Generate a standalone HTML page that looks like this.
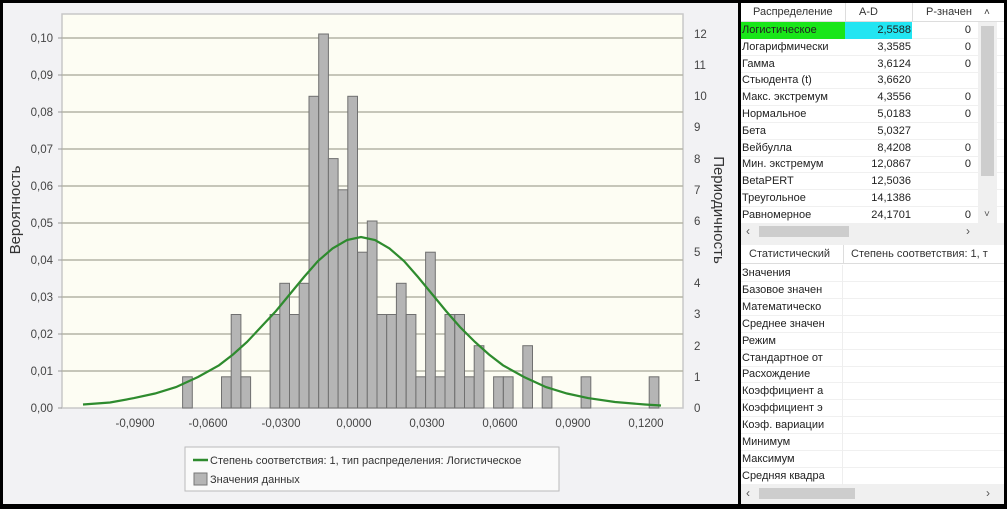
<!DOCTYPE html>
<html><head><meta charset="utf-8"><style>
*{margin:0;padding:0;box-sizing:border-box}
body{width:1007px;height:507px;background:#000;position:relative;overflow:hidden;font-family:"Liberation Sans","DejaVu Sans",sans-serif}
#chart{position:absolute;left:3px;top:3px;width:735px;height:501px;background:#f2f2f4}
#panel{position:absolute;left:741px;top:3px;width:263px;height:501px;background:#f0f0f0}
.t{position:absolute;left:0;width:263px;background:#fff;font-size:11px;color:#222}
.row{position:absolute;left:0;height:17px;line-height:17px;width:100%;border-bottom:1px solid #f0f0f0}
.c{position:absolute;top:0;height:17px;white-space:nowrap;overflow:hidden}
.hdr{position:absolute;top:0;left:0;width:100%;height:19px;background:#fff;border-bottom:1px solid #ddd;line-height:19px;color:#333}
.sb{position:absolute;background:#f0f0f0}
</style></head><body>
<div id="chart">
<svg width="735" height="501" viewBox="3 3 735 501" xmlns="http://www.w3.org/2000/svg" font-family="Liberation Sans, sans-serif">
<rect x="62" y="14" width="621" height="394" fill="#fdfdf3" stroke="#c8c8c8" stroke-width="1.5"/>
<g stroke="#b4b4a6" stroke-width="1.5">
<line x1="62" x2="683" y1="371" y2="371"/><line x1="62" x2="683" y1="334" y2="334"/><line x1="62" x2="683" y1="297" y2="297"/><line x1="62" x2="683" y1="260" y2="260"/><line x1="62" x2="683" y1="223" y2="223"/><line x1="62" x2="683" y1="186" y2="186"/><line x1="62" x2="683" y1="149" y2="149"/><line x1="62" x2="683" y1="112" y2="112"/><line x1="62" x2="683" y1="75" y2="75"/><line x1="62" x2="683" y1="38" y2="38"/>
</g>
<g fill="#b5b5b5" stroke="#707070" stroke-width="1">
<rect x="182.6" y="376.8" width="9.7" height="31.2"/>
<rect x="221.5" y="376.8" width="9.7" height="31.2"/>
<rect x="231.2" y="314.5" width="9.7" height="93.5"/>
<rect x="240.9" y="376.8" width="9.7" height="31.2"/>
<rect x="270.1" y="314.5" width="9.7" height="93.5"/>
<rect x="279.8" y="283.3" width="9.7" height="124.7"/>
<rect x="289.5" y="314.5" width="9.7" height="93.5"/>
<rect x="299.2" y="283.3" width="9.7" height="124.7"/>
<rect x="309.0" y="96.3" width="9.7" height="311.7"/>
<rect x="318.7" y="34" width="9.7" height="374"/>
<rect x="328.4" y="158.6" width="9.7" height="249.4"/>
<rect x="338.1" y="189.8" width="9.7" height="218.2"/>
<rect x="347.8" y="96.3" width="9.7" height="311.7"/>
<rect x="357.6" y="252.2" width="9.7" height="155.8"/>
<rect x="367.3" y="221" width="9.7" height="187"/>
<rect x="377.0" y="314.5" width="9.7" height="93.5"/>
<rect x="386.7" y="314.5" width="9.7" height="93.5"/>
<rect x="396.4" y="283.3" width="9.7" height="124.7"/>
<rect x="406.2" y="314.5" width="9.7" height="93.5"/>
<rect x="415.9" y="376.8" width="9.7" height="31.2"/>
<rect x="425.6" y="252.2" width="9.7" height="155.8"/>
<rect x="435.3" y="376.8" width="9.7" height="31.2"/>
<rect x="445.0" y="314.5" width="9.7" height="93.5"/>
<rect x="454.8" y="314.5" width="9.7" height="93.5"/>
<rect x="464.5" y="376.8" width="9.7" height="31.2"/>
<rect x="474.2" y="345.7" width="9.7" height="62.3"/>
<rect x="493.6" y="376.8" width="9.7" height="31.2"/>
<rect x="503.4" y="376.8" width="9.7" height="31.2"/>
<rect x="522.8" y="345.7" width="9.7" height="62.3"/>
<rect x="542.2" y="376.8" width="9.7" height="31.2"/>
<rect x="581.1" y="376.8" width="9.7" height="31.2"/>
<rect x="649.2" y="376.8" width="9.7" height="31.2"/>
</g>
<polyline fill="none" stroke="#2e8b2e" stroke-width="2.2" points="83,404.5 110,402.5 134,398.1 155,393.5 176,387.1 198,377 219,365.3 233,354.5 247,342 261,327 276,311 290,294 304,277 318,261 332.6,248.4 347,240 361,237 375,240 389.4,248.4 404,261 418,277 432,294 446,311 460,327 475,342 489,354.5 503,365.3 524,377 546,387.1 567,393.5 588,398.1 615,402 645,404.5 661,405.5"/>
<g stroke="#999"><line x1="58" x2="62" y1="408" y2="408"/><line x1="58" x2="62" y1="371" y2="371"/><line x1="58" x2="62" y1="334" y2="334"/><line x1="58" x2="62" y1="297" y2="297"/><line x1="58" x2="62" y1="260" y2="260"/><line x1="58" x2="62" y1="223" y2="223"/><line x1="58" x2="62" y1="186" y2="186"/><line x1="58" x2="62" y1="149" y2="149"/><line x1="58" x2="62" y1="112" y2="112"/><line x1="58" x2="62" y1="75" y2="75"/><line x1="58" x2="62" y1="38" y2="38"/></g>
<g font-size="11.5" fill="#444" text-anchor="end">
<text x="53" y="412">0,00</text><text x="53" y="375">0,01</text><text x="53" y="338">0,02</text><text x="53" y="301">0,03</text><text x="53" y="264">0,04</text><text x="53" y="227">0,05</text><text x="53" y="190">0,06</text><text x="53" y="153">0,07</text><text x="53" y="116">0,08</text><text x="53" y="79">0,09</text><text x="53" y="42">0,10</text>
</g>
<g font-size="11.5" fill="#444" text-anchor="start">
<text x="694" y="412">0</text><text x="694" y="381">1</text><text x="694" y="350">2</text><text x="694" y="318">3</text><text x="694" y="287">4</text><text x="694" y="256">5</text><text x="694" y="225">6</text><text x="694" y="194">7</text><text x="694" y="163">8</text><text x="694" y="131">9</text><text x="694" y="100">10</text><text x="694" y="69">11</text><text x="694" y="38">12</text>
</g>
<g font-size="11.5" fill="#444" text-anchor="middle">
<text x="135" y="427">-0,0900</text><text x="208" y="427">-0,0600</text><text x="281" y="427">-0,0300</text><text x="354" y="427">0,0000</text><text x="427" y="427">0,0300</text><text x="500" y="427">0,0600</text><text x="573" y="427">0,0900</text><text x="646" y="427">0,1200</text>
</g>
<text transform="translate(20,210) rotate(-90)" font-size="15" fill="#333" text-anchor="middle">Вероятность</text>
<text transform="translate(714,210) rotate(90)" font-size="15" fill="#333" text-anchor="middle">Периодичность</text>
<rect x="185" y="447" width="374" height="44" fill="#fafafa" stroke="#bbb"/>
<line x1="193" x2="208" y1="460" y2="460" stroke="#2e8b2e" stroke-width="2.5"/>
<text x="210" y="464" font-size="11" fill="#333">Степень соответствия: 1, тип распределения: Логистическое</text>
<rect x="194" y="473" width="13" height="12" fill="#b5b5b5" stroke="#777"/>
<text x="210" y="483" font-size="11" fill="#333">Значения данных</text>
</svg>
</div>
<div id="panel">
<div class="t" style="top:0;height:237px">
<div class="hdr"><span style="position:absolute;left:12px">Распределение</span><span style="position:absolute;left:104px;top:0;height:19px;border-left:1px solid #ddd"></span><span style="position:absolute;left:118px">A-D</span><span style="position:absolute;left:171px;top:0;height:19px;border-left:1px solid #ddd"></span><span style="position:absolute;left:185px">P-значен</span><span style="position:absolute;left:243px;font-size:10px">˄</span></div>
<div id="rows1"></div>
<div class="sb" style="left:237px;top:19px;width:19px;height:201px"><div style="position:absolute;left:3px;top:4px;width:13px;height:150px;background:#cdcdcd"></div><span style="position:absolute;left:6px;top:187px;font-size:10px;color:#555">˅</span></div>
<div class="sb" style="left:0;top:220px;width:263px;height:17px"><span style="position:absolute;left:5px;top:1px;font-size:12px;color:#555">‹</span><div style="position:absolute;left:18px;top:3px;width:90px;height:11px;background:#cdcdcd"></div><span style="position:absolute;left:225px;top:1px;font-size:12px;color:#555">›</span></div>
</div>
<div class="t" style="top:242px;height:257px">
<div class="hdr" style="background:#fff"><span style="position:absolute;left:8px">Статистический</span><span style="position:absolute;left:102px;top:0;height:19px;border-left:1px solid #ddd"></span><span style="position:absolute;left:110px;white-space:nowrap">Степень соответствия: 1, т</span></div>
<div id="rows2"></div>
<div class="sb" style="left:0;top:240px;width:263px;height:17px"><span style="position:absolute;left:5px;top:1px;font-size:12px;color:#555">‹</span><div style="position:absolute;left:18px;top:3px;width:96px;height:11px;background:#cdcdcd"></div><span style="position:absolute;left:245px;top:1px;font-size:12px;color:#555">›</span></div>
</div>
</div>
<script>
var d=[["Логистическое","2,5588","0"],["Логарифмически","3,3585","0"],["Гамма","3,6124","0"],["Стьюдента (t)","3,6620",""],["Макс. экстремум","4,3556","0"],["Нормальное","5,0183","0"],["Бета","5,0327",""],["Вейбулла","8,4208","0"],["Мин. экстремум","12,0867","0"],["BetaPERT","12,5036",""],["Треугольное","14,1386",""],["Равномерное","24,1701","0"]];
var h="";d.forEach(function(r,i){var g=i==0;h+='<div class="row" style="top:'+(19+i*16.8)+'px"><div class="c" style="left:0;width:104px;padding-left:1px;'+(g?'background:#19e619;':'')+'">'+r[0]+'</div><div class="c" style="left:104px;width:67px;text-align:right;padding-right:1px;'+(g?'background:#22e5f2;':'')+'">'+r[1]+'</div><div class="c" style="left:171px;width:66px;text-align:right;padding-right:7px">'+r[2]+'</div></div>'});
document.getElementById("rows1").innerHTML=h;
var s=["Значения","Базовое значен","Математическо","Среднее значен","Режим","Стандартное от","Расхождение","Коэффициент а","Коэффициент э","Коэф. вариации","Минимум","Максимум","Средняя квадра"];
h="";s.forEach(function(r,i){h+='<div class="row" style="top:'+(20+i*16.9)+'px"><div class="c" style="left:0;width:102px;padding-left:1px;border-right:1px solid #eee">'+r+'</div></div>'});
document.getElementById("rows2").innerHTML=h;
</script>
</body></html>
